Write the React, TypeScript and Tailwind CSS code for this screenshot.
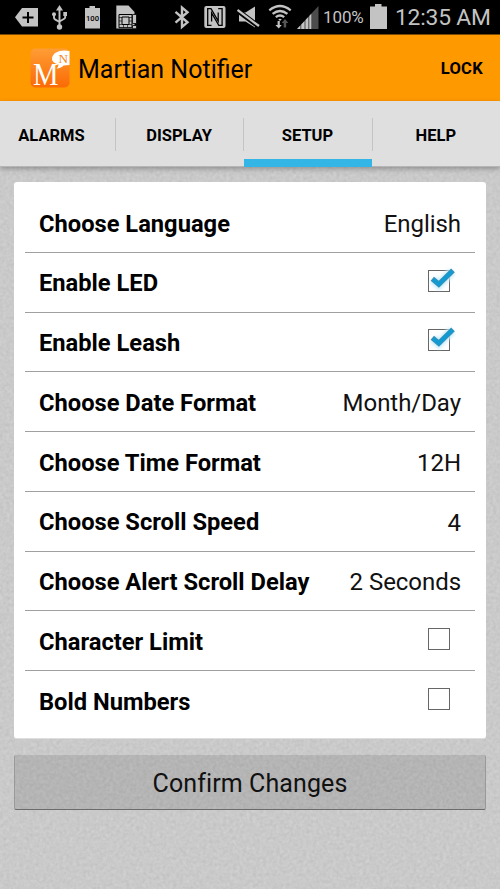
import { useState, type ReactNode } from 'react'

type Row = {
  label: string
  value?: string
  checked?: boolean
}

const initialRows: Row[] = [
  { label: 'Choose Language', value: 'English' },
  { label: 'Enable LED', checked: true },
  { label: 'Enable Leash', checked: true },
  { label: 'Choose Date Format', value: 'Month/Day' },
  { label: 'Choose Time Format', value: '12H' },
  { label: 'Choose Scroll Speed', value: '4' },
  { label: 'Choose Alert Scroll Delay', value: '2 Seconds' },
  { label: 'Character Limit', checked: false },
  { label: 'Bold Numbers', checked: false },
]

const tabs = ['ALARMS', 'DISPLAY', 'SETUP', 'HELP']

function StatusIcon({ width, className = '', children }: { width: number; className?: string; children: ReactNode }) {
  return (
    <svg width={width} height={34} viewBox={`0 0 ${width} 34`} className={`shrink-0 ${className}`} fill="#c3c3c3">
      {children}
    </svg>
  )
}

function StatusBar() {
  return (
    <div className="flex h-[34px] shrink-0 bg-black pl-[15px] text-[#c3c3c3]">
      {/* notification tag */}
      <StatusIcon width={23}>
        <path d="M0 17.3 7 8h16v18.5H7z" />
        <path d="M13 12v11M7.5 17.5h11" stroke="#000" strokeWidth="2" />
      </StatusIcon>
      {/* usb */}
      <StatusIcon width={15} className="ml-[14px]">
        <path d="M7.5 5 11 10.5H4z" />
        <circle cx="7.5" cy="27" r="2.7" />
        <circle cx="2" cy="14.3" r="2" />
        <path d="M11.3 12h3.7v4h-3.7z" />
        <path d="M7.5 9v18M2 14v3.8q0 1 1 1.6l4.5 2.6M13.2 14v3.2q0 1-1 1.6L7.5 21.5" fill="none" stroke="#c3c3c3" strokeWidth="1.9" />
      </StatusIcon>
      {/* battery level notification */}
      <StatusIcon width={15} className="ml-[18px]">
        <path d="M0 8h4.5V6h5.5v2h5v20.5H0z" />
        <text x="7.5" y="20.7" textAnchor="middle" fill="#000" fontFamily="Roboto, sans-serif" fontSize="8" fontWeight="500" textLength="13" lengthAdjust="spacingAndGlyphs">100</text>
      </StatusIcon>
      {/* sim card */}
      <StatusIcon width={22} className="ml-[16px]">
        <path d="M0.3 5.5h12.2L18.5 12v16.5H0.3z" />
        <path d="M3 14.5h13v13.2H3z" fill="#c3c3c3" stroke="#000" strokeWidth="1" />
        <path d="M6 17h7v7.5H6z" fill="none" stroke="#000" strokeWidth="1" />
        <path d="M3 17.5h3M3 21h3M3 24.5h3M13 17.5h3M13 21h3M13 24.5h3M7.5 24.5v3M11.5 24.5v3" fill="none" stroke="#000" strokeWidth=".6" />
        <path d="M16.5 14.5h4v9h-4zM16.5 25.5h4v3.2h-4z" stroke="#000" strokeWidth=".8" />
      </StatusIcon>
      {/* bluetooth */}
      <StatusIcon width={16} className="ml-[36px]">
        <path d="M1.5 11.8 13.5 22.3 8 27V7.5l5.5 4.7L1.5 22.7" fill="none" stroke="#c3c3c3" strokeWidth="2.4" />
      </StatusIcon>
      {/* nfc */}
      <StatusIcon width={22} className="ml-[14px]">
        <rect x="0.3" y="6" width="21.2" height="22" rx="2" />
        <path d="M7.5 25.3H3.7V8.7H7L14.2 21V12.5" fill="none" stroke="#000" strokeWidth="1.3" />
        <path d="M14.2 8.7H18.1V25.3H14.8L7.6 13V21.5" fill="none" stroke="#000" strokeWidth="1.3" />
      </StatusIcon>
      {/* muted speaker */}
      <StatusIcon width={23} className="ml-[11px]">
        <path d="M2 12.5h6.5L18 6.5V27.5L8.5 21.5H2z" />
        <path d="M.5 10.5 22 26.5" stroke="#000" strokeWidth="5" />
        <path d="M.5 10 22 26" stroke="#c3c3c3" strokeWidth="2.2" />
      </StatusIcon>
      {/* wifi */}
      <StatusIcon width={25} className="ml-[8px]">
        <g fill="none" stroke="#c3c3c3" strokeWidth="2.3">
          <path d="M1.3 10.3q10.7-8.6 21.4 0M4.6 13.9q7.4-5.8 14.8 0M7.8 17.2q4.2-3.3 8.4 0" />
        </g>
        <path d="M10.2 19.2q1.8-1 3.6 0L12 21z" />
        <path d="M9.6 21h2.2v4h2L10.7 28.5 7.4 25h2.2z" />
        <path d="M15.7 27.5v-4.5h-2l3.3-4 3.4 4h-2.2v4.5z" fill="#555" />
      </StatusIcon>
      {/* signal */}
      <StatusIcon width={22} className="ml-[4px]">
        <path d="M0 29 21.5 6V29z" fill="#4c4c4c" />
        <path d="M0 29 3.3 25.5V29zM4.3 29V24.4L7.5 21V29zM8.5 29V20L11.3 17V29zM12.3 29V16L14.3 13.8V29z" />
      </StatusIcon>
      <span className="ml-[4px] w-[43px] shrink-0 text-[17px] leading-[34px] tracking-[-0.1px]">100%</span>
      {/* battery */}
      <StatusIcon width={17} className="ml-[4px]">
        <path d="M0 6.5h5V4h6.5v2.5H17V29H0z" />
      </StatusIcon>
      <span className="ml-[8px] shrink-0 whitespace-nowrap text-[22.8px] leading-[35px] tracking-[-0.2px]">12:35 AM</span>
    </div>
  )
}

function Logo() {
  return (
    <svg width="40" height="40" viewBox="0 0 40 40" className="shrink-0">
      <defs>
        <linearGradient id="logo" x1="0" y1="0" x2="0" y2="1">
          <stop offset="0" stopColor="#ff9d35" />
          <stop offset="1" stopColor="#fb6a05" />
        </linearGradient>
      </defs>
      <rect x="0.5" y="0.5" width="39" height="39" rx="5" fill="url(#logo)" />
      <path d="M39.5 3Q31 1.5 26 4.5Q22 7 22 11Q22 14.5 28.5 16.5Q28.5 19 26.5 20.5Q31.5 20 33.5 17.5L39.5 17z" fill="#fff" />
      <text x="28.5" y="14.5" fill="#f58220" fontFamily="Liberation Serif, serif" fontSize="13.5" textLength="9.5" lengthAdjust="spacingAndGlyphs">N</text>
      <text x="3" y="37.3" fill="#fff" fontFamily="Liberation Serif, serif" fontSize="31" textLength="25.5" lengthAdjust="spacingAndGlyphs">M</text>
    </svg>
  )
}

function CheckBox({ checked }: { checked: boolean }) {
  return (
    <svg width="34" height="34" viewBox="0 0 34 34">
      <rect x="5.5" y="6.5" width="21" height="21" fill="#fff" stroke="#666" strokeWidth="1" />
      {checked && (
        <>
          <path d="M10 15.8 15.8 20.8 29 7.5" fill="none" stroke="#c8ecfa" strokeWidth="8.5" className="blur-[1.5px]" />
          <path d="M9.3 14.8 15.8 20.3 30 6.3" fill="none" stroke="#3e8fb2" strokeWidth="5.2" />
          <path d="M10 15.3 15.8 20.3 29.4 6.9" fill="none" stroke="#129bd2" strokeWidth="3.6" />
        </>
      )}
    </svg>
  )
}

function Texture() {
  return (
    <svg className="absolute inset-0 h-full w-full" aria-hidden="true">
      <filter id="grain" x="0" y="0" width="100%" height="100%" colorInterpolationFilters="sRGB">
        <feTurbulence type="fractalNoise" baseFrequency="0.3" numOctaves="3" seed="4" />
        <feColorMatrix values="0.07 0.05 0 0 0.73  0.07 0.05 0 0 0.73  0.07 0.05 0 0 0.73  0 0 0 0 1" />
      </filter>
      <rect width="100%" height="100%" filter="url(#grain)" />
    </svg>
  )
}

function App() {
  const [rows, setRows] = useState<Row[]>(initialRows)
  const [active, setActive] = useState('SETUP')

  const toggle = (label: string) => {
    setRows(rows.map((r) => (r.label === label ? { ...r, checked: !r.checked } : r)))
  }

  return (
    <div className="flex h-[889px] w-[500px] flex-col overflow-hidden bg-[#c9c9c9] font-[Roboto,sans-serif] text-black">
      <StatusBar />
      <header className="flex h-[67px] shrink-0 items-center border-t border-[#7a4a00] bg-[#ff9900] pl-[30px] pr-[17px]">
        <Logo />
        <h1 className="ml-[8px] flex-1 pt-[3px] text-[25px]">Martian Notifier</h1>
        <button className="pt-[3px] text-[16.5px] font-bold tracking-[0.3px]">LOCK</button>
      </header>
      <nav className="relative z-10 flex h-[66px] shrink-0 border-b border-[#b5b5b5] bg-[#dfdfdf] shadow-[0_2px_5px_rgba(0,0,0,0.28)]">
        {tabs.map((tab, i) => (
          <button
            key={tab}
            onClick={() => setActive(tab)}
            className={`relative flex items-center justify-center pt-[5px] text-[16.5px] font-bold ${i === 0 ? 'w-[115px] pr-[12px]' : 'w-[128.5px]'}`}
          >
            {i > 0 && <span className="absolute left-0 top-[17px] h-[33px] w-px bg-[#c4c4c4]" />}
            {tab}
            {active === tab && <span className="absolute -bottom-px left-[1px] right-0 h-[8px] bg-[#33b5e5]" />}
          </button>
        ))}
      </nav>
      <main className="relative flex-1">
        <Texture />
        <div className="relative px-[14px] pt-[15px]">
          <section className="h-[557px] rounded-[3px] border-b border-[#dedede] bg-white px-[11px] pt-[11px]">
            {rows.map((row, i) => (
              <div
                key={row.label}
                className={`flex h-[59.75px] items-center justify-between px-[14px] ${i < rows.length - 1 ? 'border-b border-[#a0a0a0]' : ''}`}
              >
                <span className="pt-[4px] text-[23.7px] font-bold">{row.label}</span>
                {row.value !== undefined ? (
                  <span className="pt-[3px] text-[24px] tracking-[-0.05px] text-[#111]">{row.value}</span>
                ) : (
                  <button onClick={() => toggle(row.label)} className="mr-[4px] pb-[3px]">
                    <CheckBox checked={!!row.checked} />
                  </button>
                )}
              </div>
            ))}
          </section>
          <button className="mt-[16px] h-[55px] w-full rounded-[2px] border-x border-b border-x-[#999] border-b-[#6c6c6c] bg-black/10 pt-[3px] text-[25px] tracking-[0.1px] text-[#111]">
            Confirm Changes
          </button>
        </div>
      </main>
    </div>
  )
}

export default App
